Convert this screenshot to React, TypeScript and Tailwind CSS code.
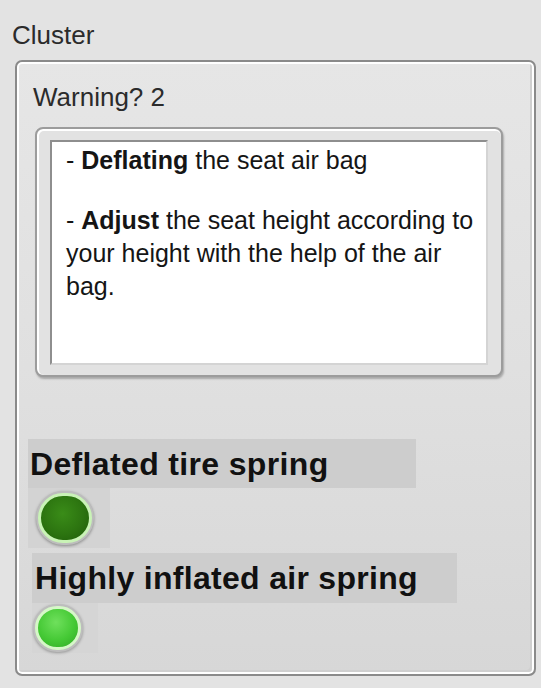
import React from 'react'

const sans = { fontFamily: '"Liberation Sans", Arial, sans-serif' }

function Led({ dark }: { dark?: boolean }) {
  return dark ? (
    <div className="flex h-[54px] w-[58px] items-center justify-center rounded-full bg-[#bdbdbd] shadow-[0_1px_3px_rgba(0,0,0,0.35)]">
      <div className="h-[50px] w-[54px] rounded-full border-[3px] border-[#c9f3b6] bg-[radial-gradient(circle_at_45%_40%,#3a8c18_0%,#2c7410_55%,#1e5a08_100%)]" />
    </div>
  ) : (
    <div className="flex h-[48px] w-[50px] items-center justify-center rounded-full bg-[#bdbdbd] shadow-[0_1px_3px_rgba(0,0,0,0.3)]">
      <div className="h-[44px] w-[46px] rounded-full border-[3px] border-[#d6f7c8] bg-[radial-gradient(circle_at_45%_35%,#6fe05c_0%,#45c935_55%,#2ea823_100%)]" />
    </div>
  )
}

export default function App() {
  return (
    <div className="min-h-[696px] w-[550px] bg-white" style={sans}>
      <div className="flex h-[688px] w-[541px] flex-col bg-[#e3e3e3]">
        {/* Cluster label */}
        <div className="pl-[12px] pt-[20px] text-[26px] leading-[30px] text-[#2b2b2b]">Cluster</div>

        {/* Cluster frame */}
        <div className="ml-[15px] mt-[10px] flex h-[616px] w-[521px] flex-col rounded-[7px] border-2 border-[#8a8a8a] bg-[linear-gradient(180deg,#e6e6e6_0%,#e0e0e0_50%,#d7d7d7_100%)] shadow-[inset_0_0_0_2px_#ffffff,inset_-3px_-3px_0_1px_#cfcfcf]">
          <div className="pl-[16px] pt-[22px] text-[26px] leading-[26px] text-[#2b2b2b]">Warning? 2</div>

          {/* string indicator */}
          <div className="ml-[18px] mt-[17px] h-[250px] w-[468px] rounded-[8px] border-2 border-[#9c9c9c] bg-[#e2e2e2] pb-[10px] pl-[13px] pr-[13px] pt-[11px] shadow-[inset_1px_1px_0_1px_#ffffff,1px_2px_2px_rgba(0,0,0,0.25)]">
            <div className="h-[225px] w-[438px] border-2 border-b-[#d4d4d4] border-l-[#8e8e8e] border-r-[#d4d4d4] border-t-[#8e8e8e] bg-white pl-[14px] pt-[2px] text-[25px] leading-[33px] text-[#151515]">
              <p>- <b>Deflating</b> the seat air bag</p>
              <p className="mt-[27px]">- <b>Adjust</b> the seat height according to your height with the help of the air bag.</p>
            </div>
          </div>

          {/* Deflated tire spring */}
          <div className="ml-[11px] mt-[62px] flex h-[49px] w-[388px] items-center bg-[#cdcdcd] pl-[2px] text-[32px] font-bold leading-none tracking-[0.35px] text-[#111]">
            Deflated tire spring
          </div>
          <div className="ml-[11px] flex h-[60px] w-[82px] items-center bg-[#d3d3d3] pl-[8px]">
            <Led dark />
          </div>

          {/* Highly inflated air spring */}
          <div className="ml-[15px] mt-[5px] flex h-[50px] w-[425px] items-center bg-[#cdcdcd] pl-[3px] text-[32px] font-bold leading-none tracking-[0.3px] text-[#111]">
            Highly inflated air spring
          </div>
          <div className="ml-[15px] flex h-[50px] w-[66px] items-center bg-[#d5d5d5] pl-[1px]">
            <Led />
          </div>
        </div>
      </div>
    </div>
  )
}
